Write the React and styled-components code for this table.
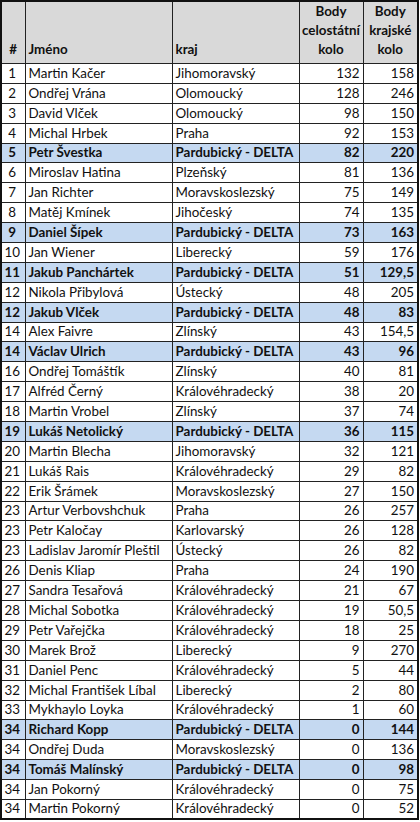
import React from 'react';
import styled, {createGlobalStyle} from 'styled-components';

const GlobalStyle = createGlobalStyle`
  html, body {
    margin: 0;
    padding: 0;
    background: #fff;
  }
  body {
    font-family: Lato, "Open Sans", "Liberation Sans", sans-serif;
    color: #111;
  }
`;

const rows = [
    ['1', 'Martin Kačer', 'Jihomoravský', '132', '158'],
    ['2', 'Ondřej Vrána', 'Olomoucký', '128', '246'],
    ['3', 'David Vlček', 'Olomoucký', '98', '150'],
    ['4', 'Michal Hrbek', 'Praha', '92', '153'],
    ['5', 'Petr Švestka', 'Pardubický - DELTA', '82', '220'],
    ['6', 'Miroslav Hatina', 'Plzeňský', '81', '136'],
    ['7', 'Jan Richter', 'Moravskoslezský', '75', '149'],
    ['8', 'Matěj Kmínek', 'Jihočeský', '74', '135'],
    ['9', 'Daniel Šípek', 'Pardubický - DELTA', '73', '163'],
    ['10', 'Jan Wiener', 'Liberecký', '59', '176'],
    ['11', 'Jakub Panchártek', 'Pardubický - DELTA', '51', '129,5'],
    ['12', 'Nikola Přibylová', 'Ústecký', '48', '205'],
    ['12', 'Jakub Vlček', 'Pardubický - DELTA', '48', '83'],
    ['14', 'Alex Faivre', 'Zlínský', '43', '154,5'],
    ['14', 'Václav Ulrich', 'Pardubický - DELTA', '43', '96'],
    ['16', 'Ondřej Tomáštík', 'Zlínský', '40', '81'],
    ['17', 'Alfréd Černý', 'Královéhradecký', '38', '20'],
    ['18', 'Martin Vrobel', 'Zlínský', '37', '74'],
    ['19', 'Lukáš Netolický', 'Pardubický - DELTA', '36', '115'],
    ['20', 'Martin Blecha', 'Jihomoravský', '32', '121'],
    ['21', 'Lukáš Rais', 'Královéhradecký', '29', '82'],
    ['22', 'Erik Šrámek', 'Moravskoslezský', '27', '150'],
    ['23', 'Artur Verbovshchuk', 'Praha', '26', '257'],
    ['23', 'Petr Kaločay', 'Karlovarský', '26', '128'],
    ['23', 'Ladislav Jaromír Pleštil', 'Ústecký', '26', '82'],
    ['26', 'Denis Kliap', 'Praha', '24', '190'],
    ['27', 'Sandra Tesařová', 'Královéhradecký', '21', '67'],
    ['28', 'Michal Sobotka', 'Královéhradecký', '19', '50,5'],
    ['29', 'Petr Vařejčka', 'Královéhradecký', '18', '25'],
    ['30', 'Marek Brož', 'Liberecký', '9', '270'],
    ['31', 'Daniel Penc', 'Královéhradecký', '5', '44'],
    ['32', 'Michal František Líbal', 'Liberecký', '2', '80'],
    ['33', 'Mykhaylo Loyka', 'Královéhradecký', '1', '60'],
    ['34', 'Richard Kopp', 'Pardubický - DELTA', '0', '144'],
    ['34', 'Ondřej Duda', 'Moravskoslezský', '0', '136'],
    ['34', 'Tomáš Malínský', 'Pardubický - DELTA', '0', '98'],
    ['34', 'Jan Pokorný', 'Královéhradecký', '0', '75'],
    ['34', 'Martin Pokorný', 'Královéhradecký', '0', '52'],
];

// spreadsheet-like table: grey header, blue bold rows for the DELTA team
const Sheet = styled.table`
  border-collapse: collapse;
  table-layout: fixed;
  width: 419px;
  border: 2px solid #111;
  font-size: 13.4px;
`;

const Col = styled.col`
  width: ${p => p.$w}px;
`;

const HeadRow = styled.tr`
  height: 60px;
  background: #d9d9d9;
`;

const HeadCell = styled.th`
  border: 1px solid #222;
  padding: 0 ${p => (p.$align === 'center' ? 0 : 3)}px 4px;
  vertical-align: bottom;
  text-align: ${p => p.$align || 'left'};
  font-weight: 700;
  line-height: 19px;
`;

const Row = styled.tr`
  height: 19.9px;
  background: ${p => (p.$delta ? '#c5d9f1' : '#fff')};
  font-weight: ${p => (p.$delta ? 700 : 400)};
`;

const Cell = styled.td`
  border: 1px solid #222;
  padding: 0 ${p => (p.$align === 'right' ? 3 : 3)}px 1px ${p => (p.$align === 'center' ? 1 : 3)}px;
  vertical-align: bottom;
  text-align: ${p => p.$align || 'left'};
  line-height: 17px;
  white-space: nowrap;
  overflow: hidden;
`;

export default function App() {
    return (
        <>
            <GlobalStyle/>
            <Sheet>
                <colgroup>
                    <Col $w={24}/>
                    <Col $w={147}/>
                    <Col $w={127}/>
                    <Col $w={64}/>
                    <Col $w={55}/>
                </colgroup>
                <thead>
                    <HeadRow>
                        <HeadCell $align="center">#</HeadCell>
                        <HeadCell>Jméno</HeadCell>
                        <HeadCell>kraj</HeadCell>
                        <HeadCell $align="center">Body<br/>celostátní<br/>kolo</HeadCell>
                        <HeadCell $align="center">Body<br/>krajské<br/>kolo</HeadCell>
                    </HeadRow>
                </thead>
                <tbody>
                    {rows.map((r, i) => (
                        <Row key={i} $delta={r[2].includes('DELTA')}>
                            <Cell $align="center">{r[0]}</Cell>
                            <Cell>{r[1]}</Cell>
                            <Cell>{r[2]}</Cell>
                            <Cell $align="right">{r[3]}</Cell>
                            <Cell $align="right">{r[4]}</Cell>
                        </Row>
                    ))}
                </tbody>
            </Sheet>
        </>
    );
}
